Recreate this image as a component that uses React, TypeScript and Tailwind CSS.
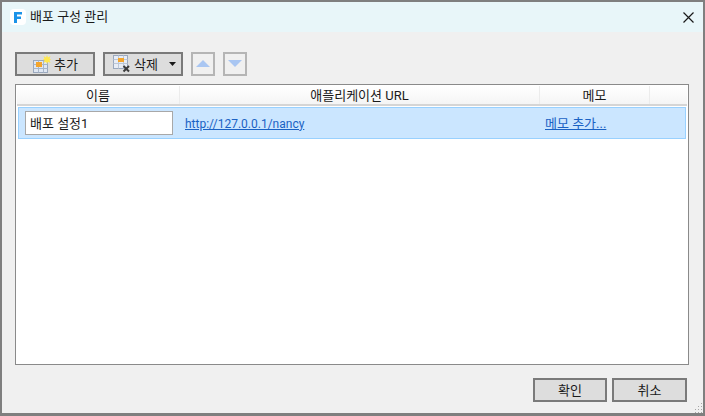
import React from 'react';

const FONT = "font-['Roboto','Noto_Sans_CJK_KR','Noto_Sans',sans-serif]";

const AddIcon = () => (
  <svg width="18" height="18" viewBox="0 0 18 18">
    <rect x="0.5" y="5.5" width="14" height="12" fill="#dfe7f3" stroke="#9aa8bd" />
    <path d="M0.5 9.5H14.5M0.5 13.5H14.5M5.5 5.5V17.5M10.5 5.5V17.5" stroke="#a9b6c9" />
    <rect x="3" y="7" width="6" height="5" fill="#f4a52c" />
    <path d="M14 0l1 2.5L17.5 1 16.5 3.5 18 4.5 16.5 5.5 17.5 8 15 6.8 14 9 13 6.8 10.5 8 11.5 5.5 10 4.5 11.5 3.5 10.5 1 13 2.5Z" fill="#ffe84d" />
  </svg>
);

const DeleteIcon = () => (
  <svg width="18" height="18" viewBox="0 0 18 18">
    <rect x="0.5" y="0.5" width="14" height="13" fill="#e8edf6" stroke="#9aa8bd" />
    <path d="M0.5 4.5H14.5M0.5 8.5H14.5M5.5 0.5V13.5M10.5 0.5V13.5" stroke="#bcc7d7" />
    <rect x="5" y="3" width="6" height="4" fill="#f4a52c" />
    <path d="M10.5 11l5.5 5.5M16 11l-5.5 5.5" stroke="#3d3d3d" strokeWidth="2" />
  </svg>
);

const Arrow = ({ up }: { up: boolean }) => (
  <button className="flex h-6 w-6 items-center justify-center border-2 border-[#b5b5b5] bg-[#f0f0f0]">
    <svg width="14" height="8" viewBox="0 0 14 8">
      <path d={up ? 'M7 0L14 7H0Z' : 'M0 0H14L7 7Z'} fill="#a9c6f2" />
    </svg>
  </button>
);

export default function App() {
  return (
    <div className={`${FONT} relative flex h-[416px] w-[705px] flex-col border-2 border-b-[3px] border-[#7f7f7f] bg-[#f0f0f0] text-[13px] text-[#1a1a1a]`}>
      <div className="flex h-[30px] shrink-0 items-center bg-[#e8f6f9] pl-2 pr-[9px]">
        <div className="flex h-4 w-4 items-center justify-center rounded-sm bg-white">
          <svg width="10" height="11" viewBox="0 0 10 11">
            <path d="M1 0H9V2.5H4V4.5H8V7H4V11H1Z" fill="#1a93e8" />
          </svg>
        </div>
        <span className="ml-1">배포 구성 관리</span>
        <svg className="ml-auto" width="11" height="11" viewBox="0 0 11 11">
          <path d="M0.5 0.5L10.5 10.5M10.5 0.5L0.5 10.5" stroke="#1a1a1a" strokeWidth="1.2" />
        </svg>
      </div>

      <div className="flex flex-1 flex-col px-[13px] pt-5">
        <div className="flex h-6 items-center">
          <button className="flex h-6 w-20 items-center border-2 border-[#7a7a7a] bg-[#dddddd] pl-4">
            <AddIcon />
            <span className="ml-[3px] pt-0.5">추가</span>
          </button>
          <button className="ml-2 flex h-6 w-20 items-center border-2 border-[#7a7a7a] bg-[#dddddd] pl-2">
            <DeleteIcon />
            <span className="ml-[3px] pt-0.5">삭제</span>
            <svg className="ml-[11px]" width="7" height="4" viewBox="0 0 7 4">
              <path d="M0 0H7L3.5 4Z" fill="#1a1a1a" />
            </svg>
          </button>
          <div className="ml-2 flex gap-2">
            <Arrow up />
            <Arrow up={false} />
          </div>
        </div>

        <div className="mt-2 flex h-[281px] w-[674px] flex-col border border-[#8a8a8a] bg-white p-px">
          <div className="flex h-5 shrink-0 border-b-2 border-[#d5d5d5] bg-gradient-to-b from-white to-[#f5f5f5]">
            <div className="flex w-[163px] items-center justify-center border-r border-[#ececec] pt-px">이름</div>
            <div className="flex w-[360px] items-center justify-center border-r border-[#ececec] pt-px">애플리케이션 URL</div>
            <div className="flex w-[110px] items-center justify-center border-r border-[#ececec] pt-px">메모</div>
          </div>
          <div className="mx-px mt-px flex h-8 items-center border border-[#99d1ff] bg-[#cbe6ff] pl-1.5">
            <div className="flex h-6 w-[148px] items-center border border-[#a8a8a8] bg-white pl-1 pt-px">배포 설정1</div>
            <a className="ml-3 w-[360px] pt-px text-xs text-[#1a62c4] underline">http://127.0.0.1/nancy</a>
            <a className="pt-px text-[#1a62c4] underline">메모 추가...</a>
          </div>
        </div>

        <div className="mt-[13px] flex justify-end gap-[5px] pr-[3px]">
          <button className="h-6 w-[74px] border-2 border-[#7a7a7a] bg-[#dddddd] pt-px">확인</button>
          <button className="h-6 w-[75px] border-2 border-[#7a7a7a] bg-[#dddddd] pt-px">취소</button>
        </div>
      </div>

      {/* size grip */}
      <svg className="absolute bottom-0 right-0" width="10" height="10" viewBox="0 0 10 10">
        <path d="M8 0h1v1H8zM8 3h1v1H8zM5 3h1v1H5zM8 6h1v1H8zM5 6h1v1H5zM2 6h1v1H2zM8 9h1v1H8zM5 9h1v1H5zM2 9h1v1H2z" fill="#a5a5a5" />
      </svg>
    </div>
  );
}
